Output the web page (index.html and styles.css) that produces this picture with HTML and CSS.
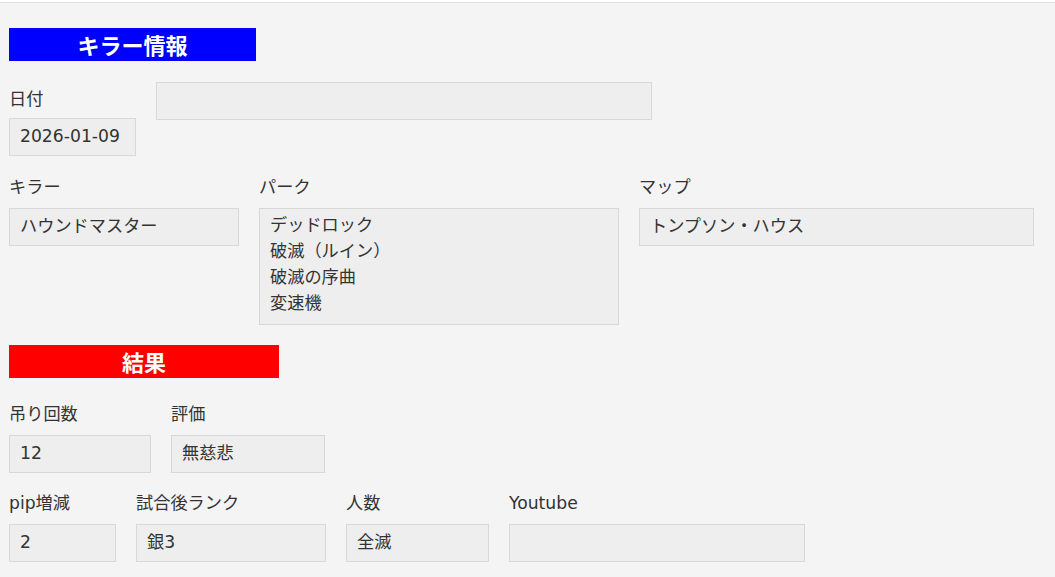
FILE: index.html
```html
<!DOCTYPE html>
<html lang="ja">
<head>
<meta charset="utf-8">
<title>キラー情報</title>
<link rel="stylesheet" href="styles.css">
</head>
<body>
<div class="page">
  <h2 class="section-title title-killer">キラー情報</h2>

  <div class="row row-date">
    <div class="field">
      <div class="label label-date">日付</div>
      <div class="box w-date">2026-01-09</div>
    </div>
    <div class="box w-blank"></div>
  </div>

  <div class="row row-killer">
    <div class="field">
      <div class="label">キラー</div>
      <div class="box w-killer">ハウンドマスター</div>
    </div>
    <div class="field">
      <div class="label">パーク</div>
      <div class="box box-multi w-perk">
        <div>デッドロック</div>
        <div>破滅（ルイン）</div>
        <div>破滅の序曲</div>
        <div>変速機</div>
      </div>
    </div>
    <div class="field">
      <div class="label">マップ</div>
      <div class="box w-map">トンプソン・ハウス</div>
    </div>
  </div>

  <h2 class="section-title title-result">結果</h2>

  <div class="row row-result1">
    <div class="field">
      <div class="label">吊り回数</div>
      <div class="box w-hook">12</div>
    </div>
    <div class="field">
      <div class="label">評価</div>
      <div class="box w-grade">無慈悲</div>
    </div>
  </div>

  <div class="row row-result2">
    <div class="field">
      <div class="label">pip増減</div>
      <div class="box w-pip">2</div>
    </div>
    <div class="field">
      <div class="label">試合後ランク</div>
      <div class="box w-rank">銀3</div>
    </div>
    <div class="field">
      <div class="label">人数</div>
      <div class="box w-count">全滅</div>
    </div>
    <div class="field">
      <div class="label">Youtube</div>
      <div class="box w-yt"></div>
    </div>
  </div>
</div>
</body>
</html>
```

FILE: styles.css
```css
html {
  background: #ffffff;
  margin: 0;
  padding: 0;
}
body {
  margin: 0;
  padding-top: 2px;
  font-family: "DejaVu Sans", "Noto Sans CJK JP", sans-serif;
  font-size: 17.2px;
  color: #333333;
}
.page {
  border-top: 1px solid #e0e0e0;
  background: #f4f4f4;
  min-height: 574px;
  box-sizing: border-box;
  padding: 0 9px 20px;
}
.section-title {
  margin: 0;
  height: 33px;
  line-height: 33px;
  color: #ffffff;
  text-align: center;
  font-family: "Noto Sans CJK JP", sans-serif;
  font-size: 22px;
  font-weight: bold;
}
.title-killer {
  margin-top: 25px;
  width: 247px;
  background: #0000ff;
}
.title-result {
  margin-top: 20px;
  width: 270px;
  background: #ff0000;
}
.row {
  display: flex;
  align-items: flex-start;
  gap: 20px;
}
.row-date { margin-top: 21px; }
.row-killer { margin-top: 19px; }
.row-result1 { margin-top: 24px; }
.row-result2 { margin-top: 18px; }
.field {
  display: flex;
  flex-direction: column;
}
.label {
  height: 24px;
  line-height: 24px;
  margin-bottom: 9px;
  white-space: nowrap;
}
.label-date {
  margin-top: 5px;
  margin-bottom: 7px;
}
.box {
  box-sizing: border-box;
  height: 38px;
  line-height: 35px;
  padding: 0 10px;
  background: #eeeeee;
  border: 1px solid #d8d8d8;
  white-space: nowrap;
}
.box-multi {
  height: 117px;
  line-height: 26px;
  padding: 3px 10px 8px;
}
.w-date { width: 127px; }
.w-blank { width: 496px; }
.w-killer { width: 230px; }
.w-perk { width: 360px; }
.w-map { width: 395px; }
.w-hook { width: 142px; }
.w-grade { width: 154px; }
.w-pip { width: 107px; }
.w-rank { width: 190px; }
.w-count { width: 143px; }
.w-yt { width: 296px; }
```
